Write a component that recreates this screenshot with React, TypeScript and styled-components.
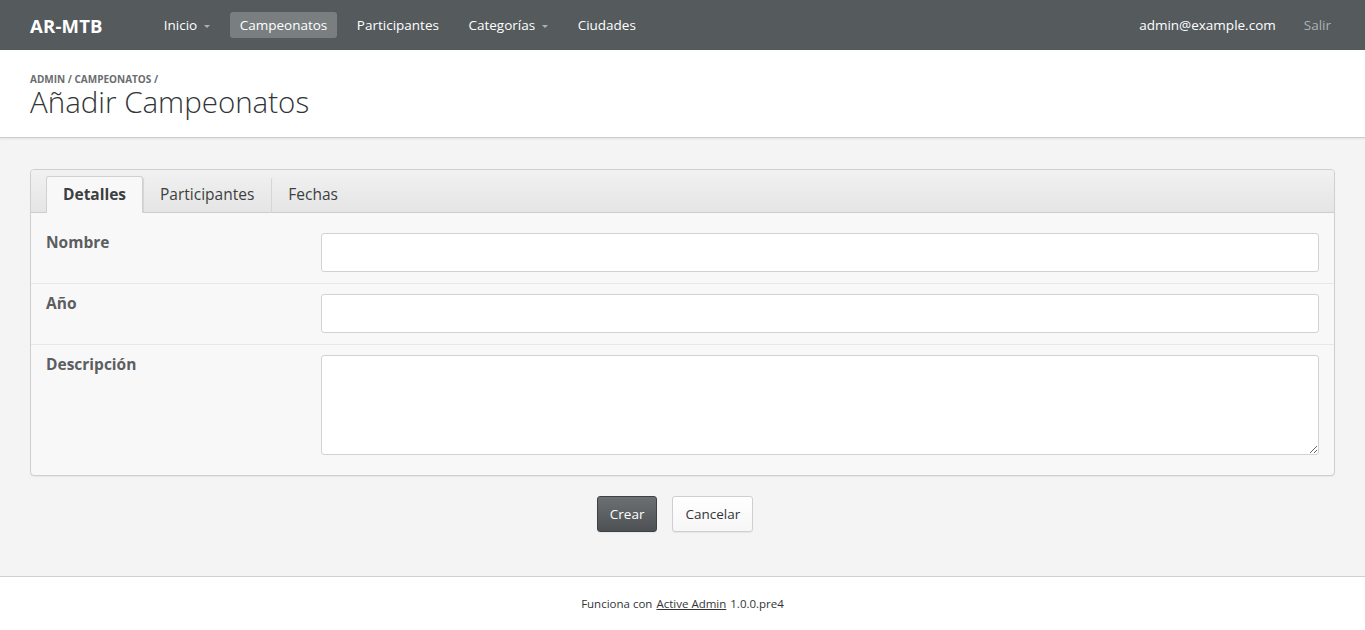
import React from "react";
import styled, { createGlobalStyle } from "styled-components";

const Global = createGlobalStyle`
  html, body { margin: 0; padding: 0; }
  body {
    background: #f4f4f4;
    font-family: "Open Sans", "Noto Sans", sans-serif;
    color: #323537;
  }
`;

const Page = styled.div`
  min-height: 630px;
  display: flex;
  flex-direction: column;
`;

const Header = styled.header`
  height: 50px;
  background: #555a5d;
  display: flex;
  align-items: center;
  padding: 0 34px 0 30px;
  box-sizing: border-box;
`;

const Logo = styled.div`
  color: #fff;
  font-weight: 700;
  font-size: 18.5px;
  margin-right: 51px;
  letter-spacing: 0.2px;
`;

const Nav = styled.nav`
  display: flex;
  align-items: center;
  gap: 9.5px;
  flex: 1;
`;

const NavItem = styled.a<{ $active?: boolean }>`
  display: flex;
  align-items: center;
  height: 26px;
  padding: 0 10px;
  border-radius: 3px;
  font-size: 13.5px;
  color: #fff;
  background: ${(p) => (p.$active ? "#797e81" : "transparent")};
  cursor: pointer;
`;

const Caret = styled.span`
  display: inline-block;
  margin-left: 7px;
  width: 0;
  height: 0;
  border-left: 3px solid transparent;
  border-right: 3px solid transparent;
  border-top: 3px solid #aeb1b3;
  margin-top: 2px;
`;

const UserArea = styled.div`
  display: flex;
  align-items: center;
  gap: 28px;
  font-size: 13.5px;
`;

const UserLink = styled.span<{ $muted?: boolean }>`
  color: ${(p) => (p.$muted ? "#aeb1b3" : "#fff")};
`;

const TitleBar = styled.div`
  background: #fff;
  height: 88px;
  padding: 23px 30px 0;
  box-sizing: border-box;
  border-bottom: 1px solid #cdcdcd;
  box-shadow: 0 1px 2px rgba(0, 0, 0, 0.08);
`;

const Breadcrumb = styled.div`
  font-size: 10px;
  font-weight: 700;
  color: #6a6d6f;
  text-transform: uppercase;
  line-height: 12px;
`;

const Title = styled.h1`
  margin: 1px 0 0;
  font-size: 29.5px;
  font-weight: 300;
  color: #323537;
  line-height: 32px;
`;

const Main = styled.main`
  flex: 1;
  padding: 31px 30px 44px;
`;

const Panel = styled.div`
  border: 1px solid #cfcfcf;
  border-radius: 4px;
  background: #f8f8f8;
  box-shadow: 0 1px 1px rgba(0, 0, 0, 0.05);
`;

const TabBar = styled.div`
  display: flex;
  align-items: flex-end;
  height: 42px;
  padding: 0 15px;
  background: linear-gradient(#f1f1f1, #e5e5e5);
  border-bottom: 1px solid #cdcdcd;
  border-radius: 4px 4px 0 0;
`;

const Tab = styled.div<{ $active?: boolean }>`
  display: flex;
  align-items: center;
  padding: 0 16px 3px;
  font-size: 15.5px;
  font-weight: ${(p) => (p.$active ? 700 : 400)};
  color: #3c3f41;
  box-sizing: border-box;
  background: ${(p) => (p.$active ? "#f8f8f8" : "transparent")};
  border: 1px solid ${(p) => (p.$active ? "#d0d0d0" : "transparent")};
  border-bottom: none;
  border-radius: 3px 3px 0 0;
  margin-bottom: -1px;
  height: ${(p) => (p.$active ? "37px" : "36px")};
  & + & {
    border-left: 1px solid #d6d6d6;
  }
`;

const Fields = styled.div`
  padding-top: 10px;
`;

const Row = styled.div<{ $last?: boolean }>`
  display: grid;
  grid-template-columns: 275px 1fr;
  padding: 10px 15px ${(p) => (p.$last ? "20px" : "11px")};
  border-top: 1px solid #e8e8e8;
  &:first-of-type {
    border-top: none;
  }
`;

const Label = styled.label`
  font-size: 15.5px;
  font-weight: 700;
  color: #5b5e60;
  margin-top: -2px;
`;

const Input = styled.input`
  height: 39px;
  box-sizing: border-box;
  border: 1px solid #d2d2d2;
  border-radius: 3px;
  background: #fff;
  width: 100%;
`;

const TextArea = styled.textarea`
  height: 100px;
  box-sizing: border-box;
  border: 1px solid #d2d2d2;
  border-radius: 3px;
  background: #fff;
  width: 100%;
  resize: vertical;
  display: block;
`;

const Actions = styled.div`
  display: flex;
  justify-content: center;
  margin-top: 20px;
`;

const Button = styled.button<{ $primary?: boolean }>`
  height: 36px;
  padding: 0 12px;
  margin-right: 15px;
  font-family: inherit;
  font-size: 13.5px;
  border-radius: 3px;
  color: ${(p) => (p.$primary ? "#fff" : "#323537")};
  background: ${(p) =>
    p.$primary ? "linear-gradient(#6c7073, #4d5154)" : "linear-gradient(#fff, #f6f6f6)"};
  border: 1px solid ${(p) => (p.$primary ? "#3e4244" : "#cfcfcf")};
  box-shadow: 0 1px 1px rgba(0, 0, 0, 0.06);
`;

const Footer = styled.footer`
  background: #fff;
  border-top: 1px solid #d0d0d0;
  height: 52px;
  display: flex;
  align-items: center;
  justify-content: center;
  font-size: 11.5px;
  color: #323537;
  padding-bottom: 1px;
`;

const FooterLink = styled.a`
  color: #323537;
  text-decoration: underline;
  margin: 0 4px;
`;

export default function App() {
  return (
    <Page>
      <Global />
      <Header>
        <Logo>AR-MTB</Logo>
        <Nav>
          <NavItem>
            Inicio <Caret />
          </NavItem>
          <NavItem $active>Campeonatos</NavItem>
          <NavItem>Participantes</NavItem>
          <NavItem>
            Categorías <Caret />
          </NavItem>
          <NavItem>Ciudades</NavItem>
        </Nav>
        <UserArea>
          <UserLink>admin@example.com</UserLink>
          <UserLink $muted>Salir</UserLink>
        </UserArea>
      </Header>
      <TitleBar>
        <Breadcrumb>Admin / Campeonatos /</Breadcrumb>
        <Title>Añadir Campeonatos</Title>
      </TitleBar>
      <Main>
        <Panel>
          <TabBar>
            <Tab $active>Detalles</Tab>
            <Tab>Participantes</Tab>
            <Tab>Fechas</Tab>
          </TabBar>
          <Fields>
            <Row>
              <Label>Nombre</Label>
              <Input type="text" />
            </Row>
            <Row>
              <Label>Año</Label>
              <Input type="text" />
            </Row>
            <Row $last>
              <Label>Descripción</Label>
              <TextArea />
            </Row>
          </Fields>
        </Panel>
        <Actions>
          <Button $primary>Crear</Button>
          <Button>Cancelar</Button>
        </Actions>
      </Main>
      <Footer>
        Funciona con <FooterLink>Active Admin</FooterLink> 1.0.0.pre4
      </Footer>
    </Page>
  );
}
